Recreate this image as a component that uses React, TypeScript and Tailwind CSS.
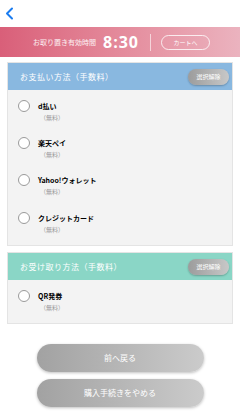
import React from "react";

interface option {
  label: string;
  note: string;
}

const payments: option[] = [
  { label: "d払い", note: "（無料）" },
  { label: "楽天ペイ", note: "（無料）" },
  { label: "Yahoo!ウォレット", note: "（無料）" },
  { label: "クレジットカード", note: "（無料）" },
];

const receipts: option[] = [{ label: "QR発券", note: "（無料）" }];

const OptionRow = ({ item }: { item: option }) => (
  <div className="flex items-start h-[33.5px] pl-[10px]">
    <span className="w-[12px] h-[12px] rounded-full border border-[#9a9a9a] bg-white shrink-0" />
    <div className="ml-[8px] flex flex-col">
      <span className="text-[7px] leading-[12px] font-bold text-black">{item.label}</span>
      <span className="text-[6px] leading-[10px] text-[#9a9a9a] ml-[2px] mt-[1px]">{item.note}</span>
    </div>
  </div>
);

const Panel = ({
  title,
  color,
  items,
}: {
  title: string;
  color: string;
  items: option[];
}) => (
  <div className="mx-[7px] border border-[#e4e4e4] bg-[#f3f3f3]">
    <div className={`${color} h-[27px] flex items-center justify-between pl-[12px] pr-[3px]`}>
      <span className="text-[8px] text-white tracking-[0.5px]">{title}</span>
      <span className="h-[16px] w-[41px] rounded-full bg-gradient-to-r from-[#9c9c9c] to-[#c8c8c8] shadow-[0_1px_2px_rgba(0,0,0,0.25)] text-[6px] text-white flex items-center justify-center">
        選択解除
      </span>
    </div>
    <div className="pt-[9.5px] flex flex-col gap-[3.9px]">
      {items.map((item, i) => (
        <OptionRow key={i} item={item} />
      ))}
    </div>
  </div>
);

export default function App() {
  return (
    <div
      className="w-[240px] h-[412px] bg-white overflow-hidden"
      style={{ fontFamily: '"Noto Sans CJK JP", "Noto Sans", sans-serif' }}
    >
      <div className="h-[27px] flex items-center pl-[5px]">
        <svg width="9" height="13" viewBox="0 0 9 13">
          <path d="M7 1.5 L2 6.5 L7 11.5" stroke="#1a7cf0" strokeWidth="2" fill="none" strokeLinecap="round" strokeLinejoin="round" />
        </svg>
      </div>
      <div className="h-[30px] bg-gradient-to-r from-[#d95f79] to-[#ebb3bf] flex items-center pl-[33px]">
        <span className="text-[7px] text-white/90">お取り置き有効時間</span>
        <span className="ml-[7px] text-[16px] leading-none font-bold text-white tracking-[1px]" style={{ fontFamily: '"Open Sans", sans-serif' }}>
          8:30
        </span>
        <span className="ml-[11px] w-px h-[17px] bg-white/60" />
        <span className="ml-[10px] h-[15px] w-[49px] rounded-full border border-white/80 text-[6px] text-white flex items-center justify-center">
          カートへ
        </span>
      </div>
      <div className="h-[5px]" />
      <Panel title="お支払い方法（手数料）" color="bg-[#89b8e0]" items={payments} />
      <div className="h-[6px]" />
      <Panel title="お受け取り方法（手数料）" color="bg-[#8ad6c6]" items={receipts} />
      <div className="flex flex-col items-center gap-[7px] mt-[20px]">
        <button className="w-[167px] h-[28px] rounded-full bg-gradient-to-r from-[#a2a2a2] to-[#cbcbcb] shadow-[0_1px_3px_rgba(0,0,0,0.25)] text-[8px] text-white">
          前へ戻る
        </button>
        <button className="w-[167px] h-[28px] rounded-full bg-gradient-to-r from-[#a2a2a2] to-[#cbcbcb] shadow-[0_1px_3px_rgba(0,0,0,0.25)] text-[8px] text-white">
          購入手続きをやめる
        </button>
      </div>
    </div>
  );
}
